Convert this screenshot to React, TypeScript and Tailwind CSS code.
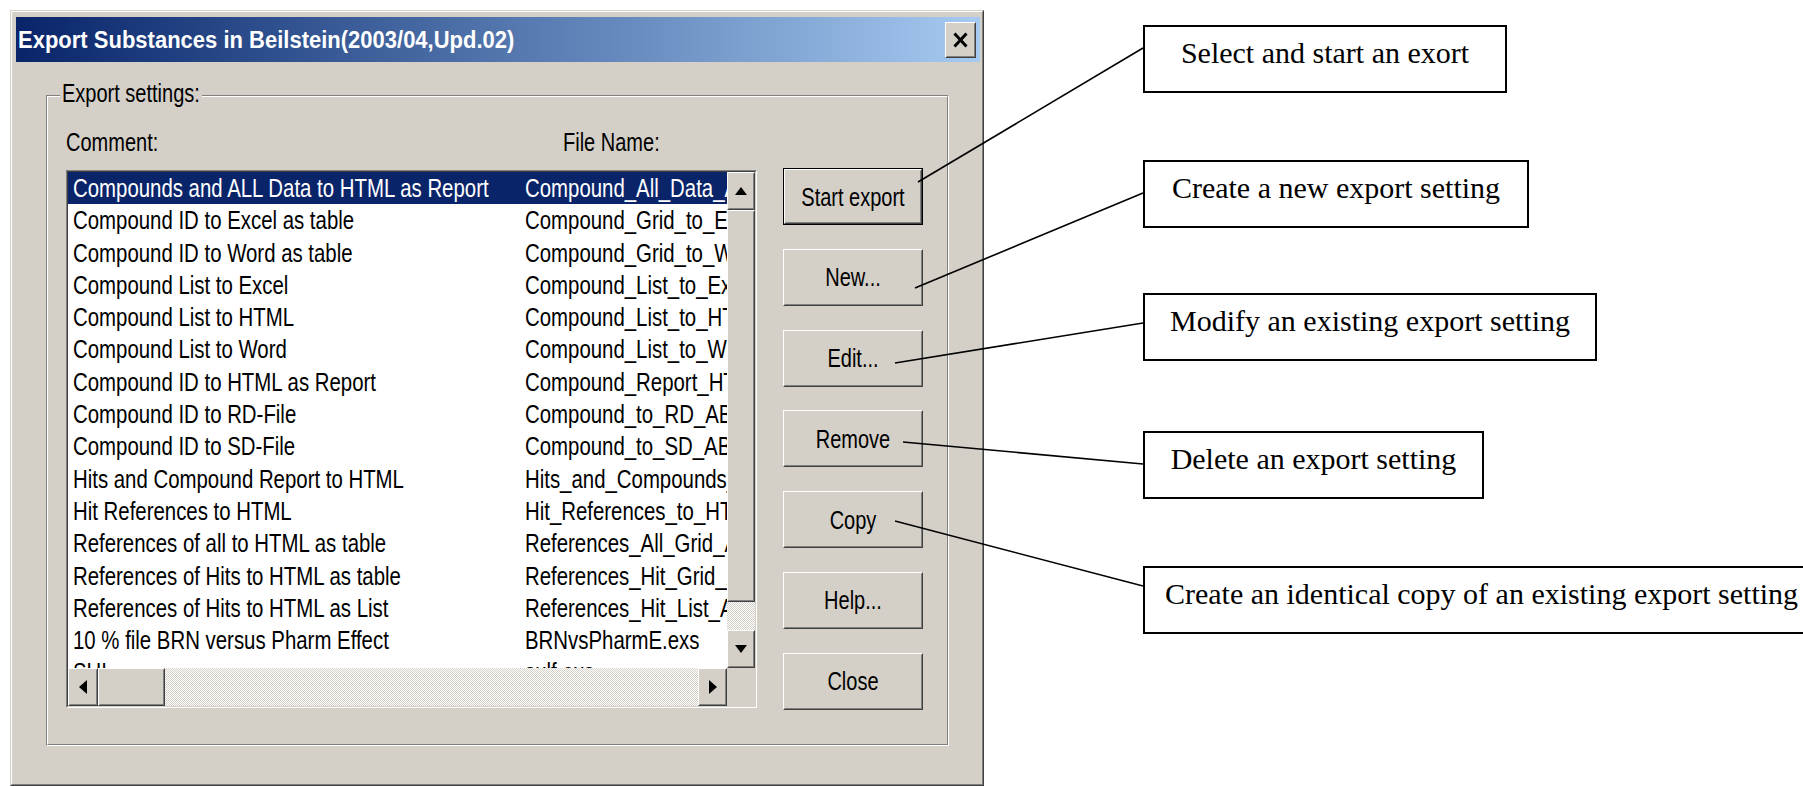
import React from "react";

const rows: [string, string][] = [
  ["Compounds and ALL Data to HTML as Report", "Compound_All_Data_A.exs"],
  ["Compound ID to Excel as table", "Compound_Grid_to_Excel.exs"],
  ["Compound ID to Word as table", "Compound_Grid_to_Word.exs"],
  ["Compound List to Excel", "Compound_List_to_Excel.exs"],
  ["Compound List to HTML", "Compound_List_to_HTML.exs"],
  ["Compound List to Word", "Compound_List_to_Word.exs"],
  ["Compound ID to HTML as Report", "Compound_Report_HTML.exs"],
  ["Compound ID to RD-File", "Compound_to_RD_ABS.exs"],
  ["Compound ID to SD-File", "Compound_to_SD_ABS.exs"],
  ["Hits and Compound Report to HTML", "Hits_and_Compounds_HTML.exs"],
  ["Hit References to HTML", "Hit_References_to_HTML.exs"],
  ["References of all to HTML as table", "References_All_Grid_A.exs"],
  ["References of Hits to HTML as table", "References_Hit_Grid_A.exs"],
  ["References of Hits to HTML as List", "References_Hit_List_A.exs"],
  ["10 % file BRN versus Pharm Effect", "BRNvsPharmE.exs"],
  ["SHI", "sulf.exs"],
];

const buttons = ["Start export", "New...", "Edit...", "Remove", "Copy", "Help...", "Close"];

const callouts = [
  {text: "Select and start an exort", cls: "mt-[25px] w-[364px]"},
  {text: "Create a new export setting", cls: "mt-[67px] w-[386px]"},
  {text: "Modify an existing export setting", cls: "mt-[65px] w-[454px]"},
  {text: "Delete an export setting", cls: "mt-[70px] w-[341px]"},
  {text: "Create an identical copy of an existing export setting", cls: "mt-[67px] w-[677px]"},
];

// tall, narrow look of the old dialog font
function T({children}: {children: React.ReactNode}) {
  return <span className="inline-block scale-y-[1.27] whitespace-pre">{children}</span>;
}

function Raised({className = "", children}: {className?: string; children?: React.ReactNode}) {
  return (
    <div className={`shrink-0 border border-t-white border-l-white border-r-[#404040] border-b-[#404040] ${className}`}>
      <div className="w-full h-full border border-t-[#d4d0c8] border-l-[#d4d0c8] border-r-[#808080] border-b-[#808080] bg-[#d4d0c8] flex items-center justify-center">
        {children}
      </div>
    </div>
  );
}

function Checker({className = ""}: {className?: string}) {
  return (
    <div
      className={`bg-[repeating-conic-gradient(#d4d0c8_0%_25%,#ffffff_0%_50%)] bg-[length:2px_2px] ${className}`}
    />
  );
}

function ListBox() {
  return (
    <div className="w-[691px] h-[538px] border border-t-[#808080] border-l-[#808080] border-r-white border-b-white">
      <div className="h-full flex flex-col border border-t-[#404040] border-l-[#404040] border-r-[#d4d0c8] border-b-[#d4d0c8]">
        <div className="flex h-[496px]">
          <div className="flex-1 overflow-hidden bg-white text-[20.4px]">
            {rows.map(([comment, file], i) => (
              <div
                key={comment}
                className={`h-[32.3px] flex items-center pl-[5px] whitespace-nowrap ${
                  i === 0 ? "bg-[#0a246a] text-white" : "text-black"
                }`}
              >
                <div className="w-[452px] shrink-0">
                  <T>{comment}</T>
                </div>
                <div className="shrink-0">
                  <T>{file}</T>
                </div>
              </div>
            ))}
          </div>
          <div className="w-[28px] flex flex-col">
            <Raised className="h-[38px]">
              <svg width="12" height="8" viewBox="0 0 12 8">
                <polygon points="0,8 6,0 12,8" fill="#000" />
              </svg>
            </Raised>
            <Raised className="h-[392px]" />
            <Checker className="h-[28px]" />
            <Raised className="h-[38px]">
              <svg width="12" height="8" viewBox="0 0 12 8">
                <polygon points="0,0 12,0 6,8" fill="#000" />
              </svg>
            </Raised>
          </div>
        </div>
        <div className="flex h-[38px]">
          <Raised className="w-[30px] h-full">
            <svg width="8" height="14" viewBox="0 0 8 14">
              <polygon points="8,0 8,14 0,7" fill="#000" />
            </svg>
          </Raised>
          <Raised className="w-[67px] h-full" />
          <Checker className="flex-1 h-full" />
          <Raised className="w-[29px] h-full">
            <svg width="8" height="14" viewBox="0 0 8 14">
              <polygon points="0,0 8,7 0,14" fill="#000" />
            </svg>
          </Raised>
          <div className="w-[28px] bg-[#d4d0c8]" />
        </div>
      </div>
    </div>
  );
}

function Dialog() {
  return (
    <div className="ml-[10px] mt-[10px] w-[974px] h-[776px] shrink-0 border border-t-[#d4d0c8] border-l-[#d4d0c8] border-r-[#404040] border-b-[#404040]">
      <div className="h-full border border-t-white border-l-white border-r-[#808080] border-b-[#808080] bg-[#d4d0c8] pt-[5px] pl-[4px] pr-[2px]">
        <div className="h-[45px] flex items-center justify-between bg-linear-to-r from-[#0a246a] to-[#a6caf0]">
          <span className="pl-[2px] text-white font-bold text-[22px] leading-none whitespace-nowrap inline-block scale-y-[1.08]">
            Export Substances in Beilstein(2003/04,Upd.02)
          </span>
          <Raised className="w-[31px] h-[36px] mr-[4px]">
            <svg width="15" height="16" viewBox="0 0 15 16">
              <path d="M1.5 1.5 L13.5 14.5 M13.5 1.5 L1.5 14.5" stroke="#000" strokeWidth="3" />
            </svg>
          </Raised>
        </div>

        <div className="ml-[30px] mt-[33px] relative w-[903px] h-[651px] border border-t-[#808080] border-l-[#808080] border-r-white border-b-white">
          <div className="absolute left-[13px] top-[-17px] h-[28px] px-[2px] bg-[#d4d0c8] flex items-center text-black">
            <T>Export settings:</T>
          </div>
          <div className="h-full border border-t-white border-l-white border-r-[#808080] border-b-[#808080] flex pl-[18px]">
            <div className="w-[691px] pt-[30px]">
              <div className="h-[30px] flex items-center text-black whitespace-nowrap">
                <div className="w-[497px]">
                  <T>Comment:</T>
                </div>
                <T>File Name:</T>
              </div>
              <div className="mt-[13px]">
                <ListBox />
              </div>
            </div>
            <div className="ml-[26px] pt-[71px] flex flex-col gap-[23.8px]">
              {buttons.map((b, i) =>
                i === 0 ? (
                  <div key={b} className="w-[140px] h-[57px] border border-black">
                    <Raised className="w-full h-full">
                      <T>{b}</T>
                    </Raised>
                  </div>
                ) : (
                  <Raised key={b} className="w-[140px] h-[57px]">
                    <T>{b}</T>
                  </Raised>
                )
              )}
            </div>
          </div>
        </div>
      </div>
    </div>
  );
}

export default function App() {
  return (
    <div className="relative w-[1803px] h-[786px] overflow-hidden bg-white flex items-start font-['Liberation_Sans',Arial,sans-serif] text-[20px] leading-none">
      <Dialog />

      <div className="ml-[159px] flex flex-col shrink-0 font-['Liberation_Serif','Times_New_Roman',serif]">
        {callouts.map((c) => (
          <div
            key={c.text}
            className={`h-[68px] shrink-0 border-2 border-black bg-white flex justify-center pt-[11px] ${c.cls}`}
          >
            <span className="text-[30px] leading-[30px] text-black whitespace-nowrap">{c.text}</span>
          </div>
        ))}
      </div>

      <svg className="absolute left-0 top-0 pointer-events-none" width="1803" height="786">
        <g stroke="#000" strokeWidth="1.6">
          <line x1="918" y1="182" x2="1143" y2="48" />
          <line x1="915" y1="288" x2="1143" y2="193" />
          <line x1="895" y1="363" x2="1143" y2="323" />
          <line x1="903" y1="442" x2="1143" y2="464" />
          <line x1="895" y1="521" x2="1143" y2="586" />
        </g>
      </svg>
    </div>
  );
}
